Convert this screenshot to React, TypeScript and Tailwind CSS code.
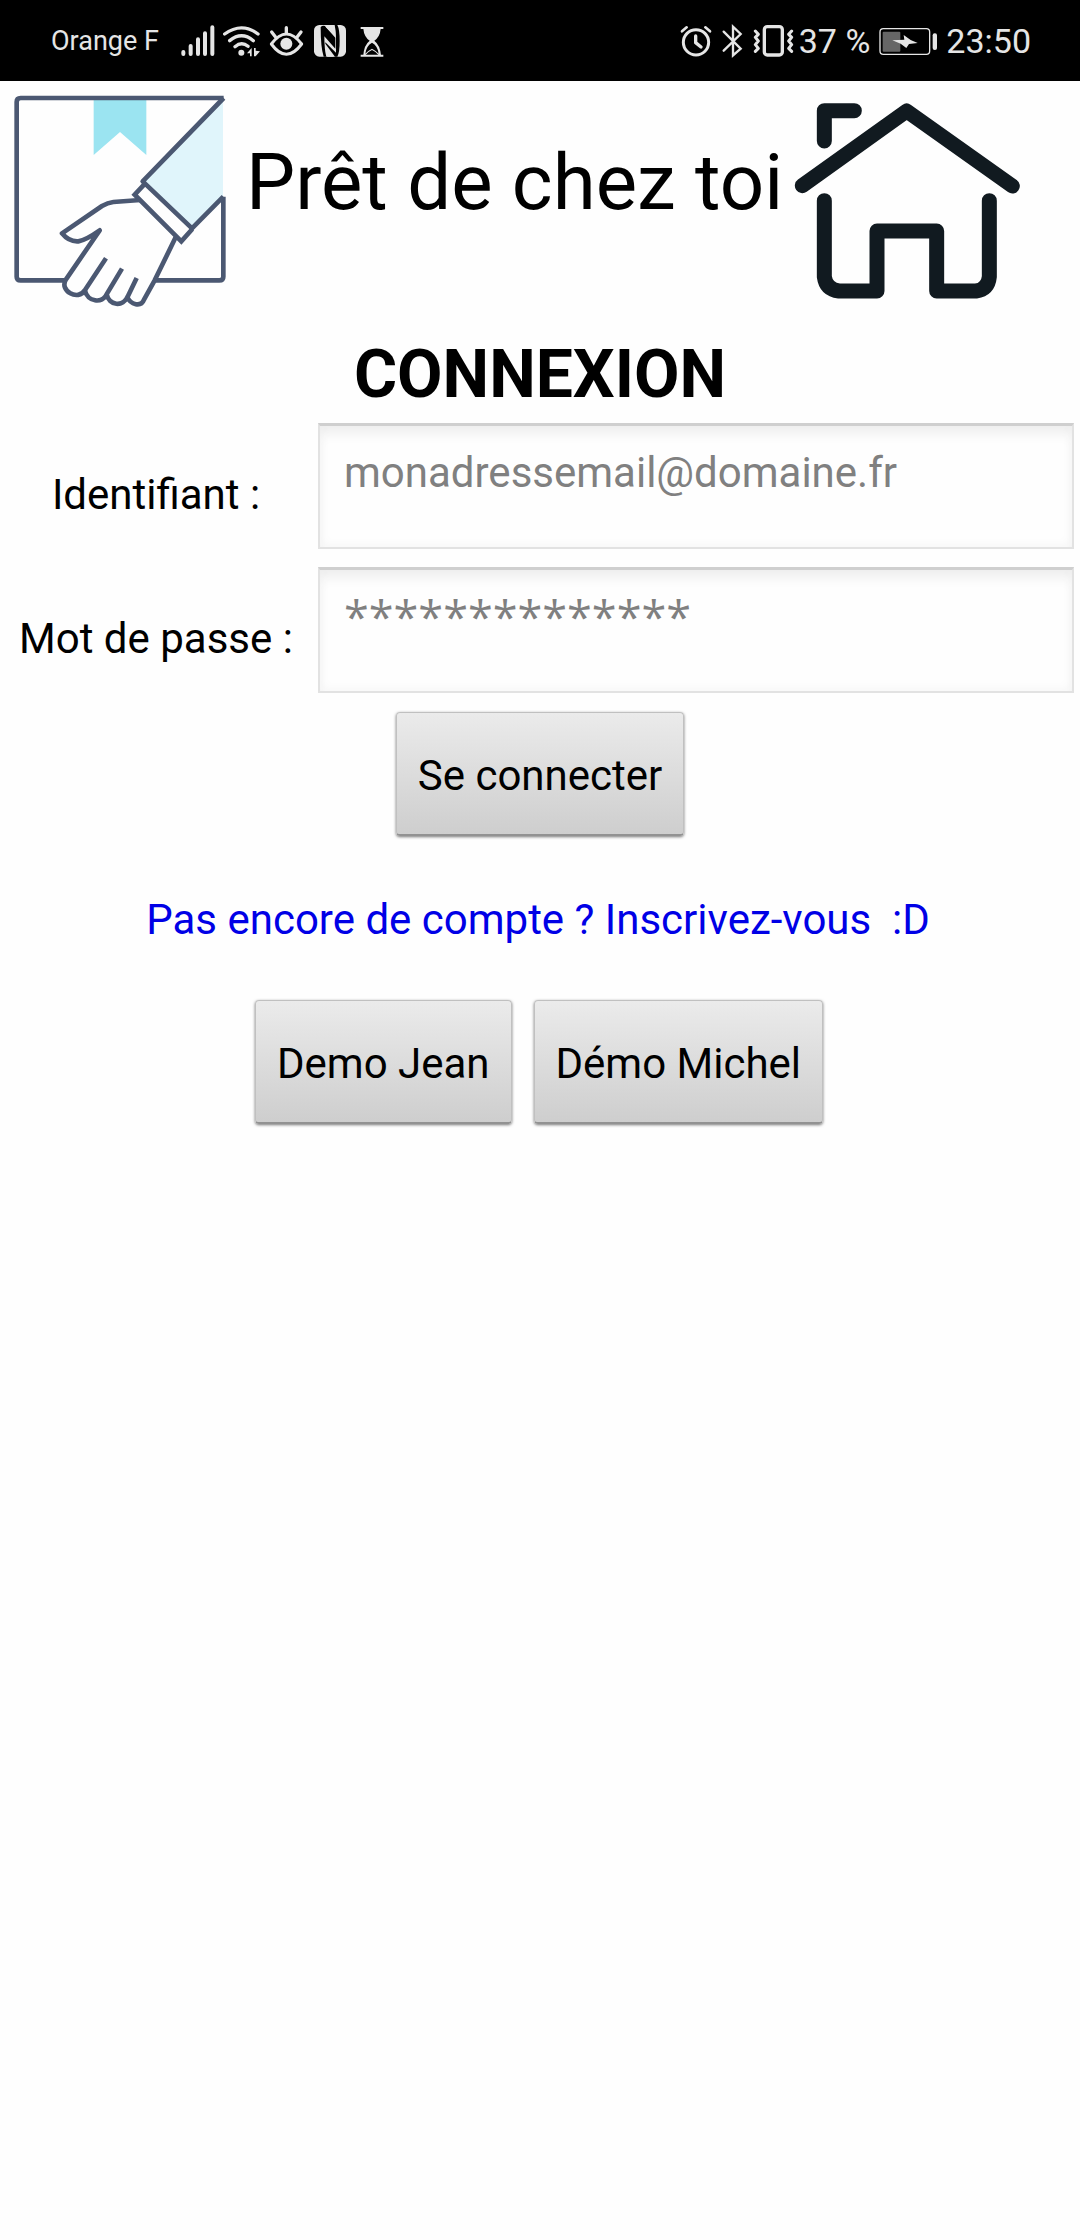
import React from "react";

function StatusBar() {
  return (
    <div className="flex h-[81px] items-center justify-between bg-black pl-[51px] pr-[49px] text-[#e5e5e5]">
      <div className="flex items-center">
        <span className="text-[27px] leading-9">Orange F</span>
        <svg className="ml-[21px] h-9 w-9" viewBox="540 66 108 108" fill="none" stroke="currentColor" strokeWidth="12" strokeLinecap="round">
          <path d="M550 153V159M572 135V159M594 115V159M615 97V159M637 79V159" />
        </svg>
        <svg className="ml-[5px] h-9 w-10" viewBox="664 66 120 108" fill="none" stroke="currentColor" strokeWidth="10" strokeLinecap="round">
          <path d="M675 99Q726 62 775 99M690 119Q726 90 761 119M706 137Q726 120 745 136" />
          <circle cx="725" cy="155" r="9" fill="currentColor" stroke="none" />
          <path d="M756 141V166H751V157L742 157ZM763 141H768V149L781 151L768 166H763Z" fill="currentColor" stroke="none" />
        </svg>
        <svg className="ml-[7px] h-9 w-9" viewBox="804 66 108 108" fill="none" stroke="currentColor" strokeWidth="9" strokeLinecap="round" strokeLinejoin="round">
          <path d="M814 129Q859 69 905 129Q859 191 814 129Z" />
          <circle cx="859" cy="128" r="18" fill="currentColor" stroke="none" />
          <path d="M859 80V96M815 93L826 107M903 93L892 107" strokeWidth="10" />
        </svg>
        <svg className="ml-2 h-9 w-9" viewBox="936 66 108 108">
          <rect x="942" y="72" width="96" height="95" rx="16" fill="currentColor" />
          <path d="M962 78Q968 72 975 75L1006 110V143L973 106Q973 145 979 167H971Q962 140 962 78ZM1004 72H1012Q1019 85 1019 120Q1019 155 1012 167H1005L976 128V124L1008 155V110Q1008 90 1004 72Z" fill="black" />
          <path d="M977 72H1000Q1006 83 1006 107L977 78ZM976 136L1002 167H982Q976 155 976 136Z" fill="currentColor" />
        </svg>
        <svg className="ml-3 h-9 w-6" viewBox="1080 66 72 108" fill="none" stroke="currentColor" strokeWidth="6">
          <path d="M1082 81H1150M1082 164H1150" />
          <path d="M1090 83H1142Q1140 107 1123 119Q1140 132 1143 163H1136Q1130 153 1116 147Q1102 153 1096 163H1090Q1092 132 1109 119Q1092 107 1090 83Z" fill="currentColor" stroke="none" />
          <path d="M1116 125Q1133 134 1136 158Q1128 149 1116 143Q1104 149 1096 158Q1099 134 1116 125Z" fill="black" stroke="none" />
        </svg>
      </div>
      <div className="flex items-center">
        <svg className="h-9 w-8" viewBox="60 66 96 108" fill="none" stroke="currentColor" strokeLinecap="round">
          <circle cx="108" cy="124" r="38" strokeWidth="9" />
          <path d="M107 105V125L123 138" strokeWidth="10" strokeLinejoin="round" />
          <path d="M66 91L80 79M136 79L150 91" strokeWidth="8" />
        </svg>
        <svg className="ml-[9px] h-9 w-6" viewBox="183 66 72 108" fill="none" stroke="currentColor" strokeWidth="7" strokeLinecap="round" strokeLinejoin="miter">
          <path d="M191 92L242 143L219 163V77L242 99L191 149" />
        </svg>
        <svg className="ml-2 h-9 w-[41px]" viewBox="279 66 123 108" fill="none" stroke="currentColor" strokeLinecap="round">
          <rect x="313" y="77" width="54" height="85" rx="9" strokeWidth="10" />
          <path d="M286 90L295 100L286 109L295 120L286 131L295 142L286 151M395 90L386 100L395 109L386 120L395 131L386 142L395 151" strokeWidth="9" strokeLinejoin="round" />
        </svg>
        <span className="ml-[5px] whitespace-pre text-[34px] leading-10">37 %</span>
        <svg className="ml-[9px] h-9 w-[58px]" viewBox="657 66 174 108" fill="none">
          <rect x="660" y="83" width="149" height="77" rx="10" stroke="currentColor" strokeWidth="4" />
          <rect x="668" y="92" width="53" height="60" rx="3" fill="#666666" />
          <path d="M731 102L752 117L773 126L747 129L739 141L722 128L697 118L733 116Z" fill="currentColor" />
          <rect x="818" y="97" width="13" height="50" rx="6" fill="currentColor" />
        </svg>
        <span className="ml-[9px] text-[34px] leading-10">23:50</span>
      </div>
    </div>
  );
}

function HandshakeLogo() {
  return (
    <svg className="h-60 w-60 shrink-0" viewBox="0 3 720 720" fill="none" stroke="#4b5872" strokeWidth="14" strokeLinecap="butt">
      <path d="M281 60H439V225L360 156L281 225Z" fill="#9be4f1" stroke="none" />
      <path d="M669 62V350L576 444L432 304Z" fill="#e0f5fb" stroke="none" />
      <path d="M671 54H62Q50 54 50 66V590Q50 601 62 601H192M462 601H658Q670 601 670 590V350" />
      <path d="M671 54L428 304L576 445L670 350" strokeLinejoin="round" />
      <path d="M435 311L404 344L544 484L577 447" />
      <path d="M421 360L340 366Q323 368 306 378L186 460Q207 486 235 484Q258 480 299 451L198 598C176 632 235 665 255 630L318 535" strokeLinejoin="round" />
      <path d="M255 632C262 664 307 674 321 641L366 566M320 643C327 676 369 684 384 648L410 594M381 650C392 675 423 682 432 659L464 601L527 472" strokeLinejoin="round" />
    </svg>
  );
}

function HouseLogo() {
  return (
    <svg className="h-60 w-[260px] shrink-0" viewBox="0 3 780 720" fill="none" stroke="#111a20" strokeWidth="45" strokeLinecap="round" strokeLinejoin="round">
      <path d="M133 183V92H223M67 317L380 93L697 318" />
      <path d="M133 362V590Q138 628 177 633H291V453H470V633H588Q624 628 628 590V362" />
    </svg>
  );
}

type FieldProps = { id: string; label: string; type: string; placeholder: string; textStyle: string };

function Field({ id, label, type, placeholder, textStyle }: FieldProps) {
  return (
    <div className="flex h-36 items-center pr-[6px]">
      <label htmlFor={id} className="w-[318px] shrink-0 pr-[6px] pt-4 text-center">
        {label}
      </label>
      <input
        id={id}
        type={type}
        placeholder={placeholder}
        className={
          "h-[126px] min-w-0 flex-1 border-2 border-t-[3px] border-[#e2e2e2] border-t-[#cfcfcf] bg-[#fefefe] px-6 pb-[50px] pt-[21px] shadow-[inset_0_12px_14px_-6px_#ececec,inset_0_0_12px_#f4f4f4] outline-none placeholder:text-[#808080] placeholder:opacity-100 " +
          textStyle
        }
      />
    </div>
  );
}

function GreyButton({ children }: { children: React.ReactNode }) {
  return (
    <button
      type="button"
      className="h-[124px] rounded-[4px] border border-b-2 border-[#c0c0c0] border-b-[#929292] bg-linear-to-b from-[#ebebeb] to-[#cecece] px-[21px] pt-1 text-black shadow-[0_1px_3px_#777777]"
    >
      {children}
    </button>
  );
}

export default function App() {
  return (
    <div className="min-h-screen bg-[#fefefe] font-[Roboto,sans-serif] text-[42px] leading-[49px] text-black">
      <StatusBar />
      <header className="flex h-[255px] items-start">
        <HandshakeLogo />
        <h1 className="ml-[6px] mr-[-3px] whitespace-nowrap pt-14 text-[78px] leading-[92px]">Prêt de chez toi</h1>
        <HouseLogo />
      </header>
      <main>
        <h2 className="text-center text-[66px] font-bold leading-[78px]">CONNEXION</h2>
        <form>
          <Field id="login" label="Identifiant :" type="email" placeholder="monadressemail@domaine.fr" textStyle="text-[42px]" />
          <Field
            id="password"
            label="Mot de passe :"
            type="password"
            placeholder="**************"
            textStyle="font-['Open_Sans',sans-serif] text-[45px]"
          />
          <div className="flex h-36 items-center justify-center">
            <GreyButton>Se connecter</GreyButton>
          </div>
        </form>
        <div className="flex h-36 items-center justify-center pr-1 pt-[2px]">
          <a href="#inscription" className="whitespace-pre text-[#0000e6]">
            {"Pas encore de compte ? Inscrivez-vous  :D"}
          </a>
        </div>
        <div className="flex h-36 items-center justify-center gap-[22px] pr-[2px]">
          <GreyButton>Demo Jean</GreyButton>
          <GreyButton>Démo Michel</GreyButton>
        </div>
      </main>
    </div>
  );
}
